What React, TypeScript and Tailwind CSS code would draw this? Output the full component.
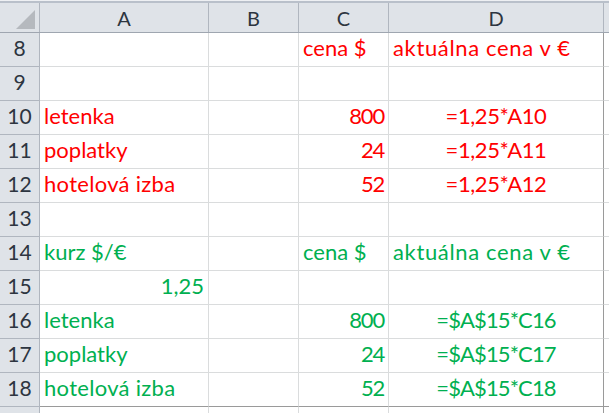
import React from 'react';

type Cell = { text?: string; align?: 'left' | 'right' | 'center'; tr?: string };
type Row = { n: number; color?: string; cells: Cell[] };

const RED = 'text-[#ff0000]';
const GREEN = 'text-[#00b050]';

const NUM = 'tracking-[-1.2px]';
const F1 = 'tracking-[-0.4px]';
const F2 = 'tracking-[-0.9px]';
const WIDE = 'tracking-[0.65px]';

const rows: Row[] = [
  { n: 8, color: RED, cells: [{}, {}, { text: 'cena $' }, { text: 'aktuálna cena v €', tr: WIDE }] },
  { n: 9, cells: [{}, {}, {}, {}] },
  { n: 10, color: RED, cells: [{ text: 'letenka' }, {}, { text: '800', align: 'right', tr: NUM }, { text: '=1,25*A10', align: 'center', tr: F1 }] },
  { n: 11, color: RED, cells: [{ text: 'poplatky' }, {}, { text: '24', align: 'right', tr: NUM }, { text: '=1,25*A11', align: 'center', tr: F1 }] },
  { n: 12, color: RED, cells: [{ text: 'hotelová izba', tr: 'tracking-[0.3px]' }, {}, { text: '52', align: 'right', tr: NUM }, { text: '=1,25*A12', align: 'center', tr: F1 }] },
  { n: 13, cells: [{}, {}, {}, {}] },
  { n: 14, color: GREEN, cells: [{ text: 'kurz $/€' }, {}, { text: 'cena $' }, { text: 'aktuálna cena v €', tr: WIDE }] },
  { n: 15, color: GREEN, cells: [{ text: '1,25', align: 'right' }, {}, {}, {}] },
  { n: 16, color: GREEN, cells: [{ text: 'letenka' }, {}, { text: '800', align: 'right', tr: NUM }, { text: '=$A$15*C16', align: 'center', tr: F2 }] },
  { n: 17, color: GREEN, cells: [{ text: 'poplatky' }, {}, { text: '24', align: 'right', tr: NUM }, { text: '=$A$15*C17', align: 'center', tr: F2 }] },
  { n: 18, color: GREEN, cells: [{ text: 'hotelová izba', tr: 'tracking-[0.3px]' }, {}, { text: '52', align: 'right', tr: NUM }, { text: '=$A$15*C18', align: 'center', tr: F2 }] },
];

const widths = ['w-[169px]', 'w-[90px]', 'w-[90px]', 'w-[215px]'];
const letters = ['A', 'B', 'C', 'D'];

const alignClass = (a?: string) =>
  a === 'right' ? 'justify-end pr-[4px]' : a === 'center' ? 'justify-center' : 'justify-start pl-[4px]';

const App: React.FC = () => {
  return (
    <div className="w-[609px] h-[413px] overflow-hidden bg-white font-['Lato',sans-serif] select-none">
      <div className="h-[1px] bg-[#eef0f3]" />
      <div className="h-[2px] bg-[#b9c0ca]" />
      {/* column headers */}
      <div className="flex h-[30px] bg-[#dfe3e8] border-b border-[#9fa6b0] text-[#2d3540] text-[20px]">
        <div className="w-[40px] shrink-0 border-r border-[#b0b6bf] relative">
          <svg className="absolute left-[16px] top-[7px]" width="20" height="20" viewBox="0 0 20 20">
            <polygon points="19,0 19,19 0,19" fill="#b5b9be" />
          </svg>
        </div>
        {letters.map((l, i) => (
          <div
            key={l}
            className={`${widths[i]} shrink-0 border-r border-[#b0b6bf] flex items-center justify-center leading-none pt-[1px]`}
          >
            {l}
          </div>
        ))}
        <div className="flex-1" />
      </div>

      {rows.map((row, ri) => {
        const last = ri === rows.length - 1;
        return (
          <div key={row.n} className="flex h-[34px]">
            <div className="w-[40px] shrink-0 bg-[#dfe3e8] border-r border-b border-[#b0b6bf] text-[#2d3540] text-[21px] flex items-end justify-center pb-[5px] leading-[26px]">
              {row.n}
            </div>
            {row.cells.map((c, ci) => (
              <div
                key={ci}
                className={`${widths[ci]} shrink-0 border-b border-r ${
                  last ? 'border-b-[#9a9a9a]' : 'border-b-[#dadcdd]'
                } ${ci === 3 ? 'border-r-[#9a9a9a]' : 'border-r-[#dadcdd]'} flex items-end ${alignClass(
                  c.align
                )} pb-[5px] text-[22px] leading-[26px] whitespace-nowrap ${c.tr ?? ''} ${row.color ?? ''}`}
              >
                {c.text}
              </div>
            ))}
            <div className={`flex-1 border-b ${last ? 'border-[#9a9a9a]' : 'border-[#dadcdd]'}`} />
          </div>
        );
      })}
      <div className="flex h-[34px]">
        <div className="w-[40px] shrink-0 bg-[#dfe3e8] border-r border-[#b0b6bf]" />
        <div className="w-[169px] shrink-0 border-r border-[#dadcdd]" />
        <div className="w-[90px] shrink-0 border-r border-[#dadcdd]" />
        <div className="w-[90px] shrink-0 border-r border-[#dadcdd]" />
        <div className="w-[215px] shrink-0 border-r border-[#9a9a9a]" />
      </div>
    </div>
  );
};

export default App;
